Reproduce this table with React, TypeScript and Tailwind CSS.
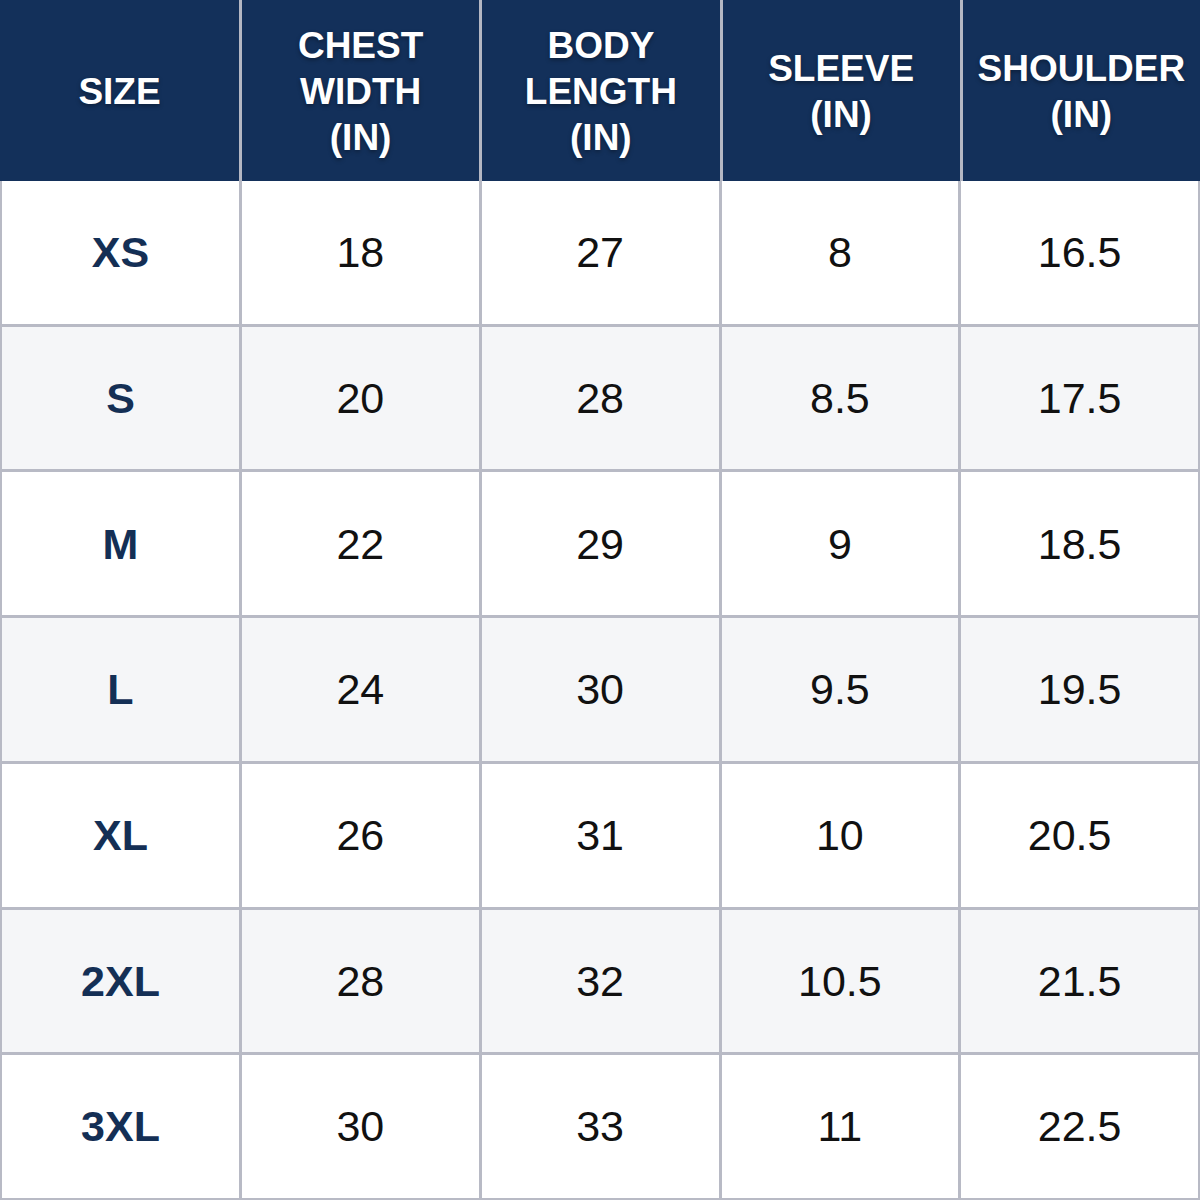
const headers: string[][] = [
  ['SIZE'],
  ['CHEST', 'WIDTH', '(IN)'],
  ['BODY', 'LENGTH', '(IN)'],
  ['SLEEVE', '(IN)'],
  ['SHOULDER', '(IN)'],
];

const rows: string[][] = [
  ['XS', '18', '27', '8', '16.5'],
  ['S', '20', '28', '8.5', '17.5'],
  ['M', '22', '29', '9', '18.5'],
  ['L', '24', '30', '9.5', '19.5'],
  ['XL', '26', '31', '10', '20.5'],
  ['2XL', '28', '32', '10.5', '21.5'],
  ['3XL', '30', '33', '11', '22.5'],
];

export default function App() {
  return (
    <div className="w-[1200px] h-[1200px] flex flex-col bg-white" style={{ fontFamily: '"Liberation Sans", Arial, sans-serif' }}>
      <div className="grid grid-cols-[239px_repeat(4,1fr)] h-[181px] bg-[#13305a]">
        {headers.map((lines, i) => (
          <div
            key={i}
            className={`flex flex-col items-center justify-center text-white font-bold text-[37px] leading-[46px] pt-[2px] [text-shadow:0_2px_4px_rgba(0,0,0,0.35)] ${i > 0 ? 'border-l-[3px] border-[#b4b7c3]' : ''}`}
          >
            {lines.map((l) => (
              <span key={l}>{l}</span>
            ))}
          </div>
        ))}
      </div>
      <div className="flex-1 flex flex-col border-x-2 border-b-2 border-[#b8bac5]">
        {rows.map((r, ri) => (
          <div
            key={r[0]}
            className={`flex-1 grid grid-cols-[237px_repeat(4,1fr)] ${ri > 0 ? 'border-t-[3px] border-[#b8bac5]' : ''} ${ri % 2 === 1 ? 'bg-[#f5f6f8]' : 'bg-white'}`}
          >
            {r.map((v, ci) => (
              <div
                key={ci}
                className={`flex items-center justify-center text-[43px] ${ci > 0 ? 'border-l-[3px] border-[#b8bac5]' : ''} ${ci === 0 ? 'font-bold text-[#142f55]' : 'text-[#111]'} ${ci === 4 && v === '20.5' ? 'pr-[20px]' : ''}`}
              >
                {v}
              </div>
            ))}
          </div>
        ))}
      </div>
    </div>
  );
}
